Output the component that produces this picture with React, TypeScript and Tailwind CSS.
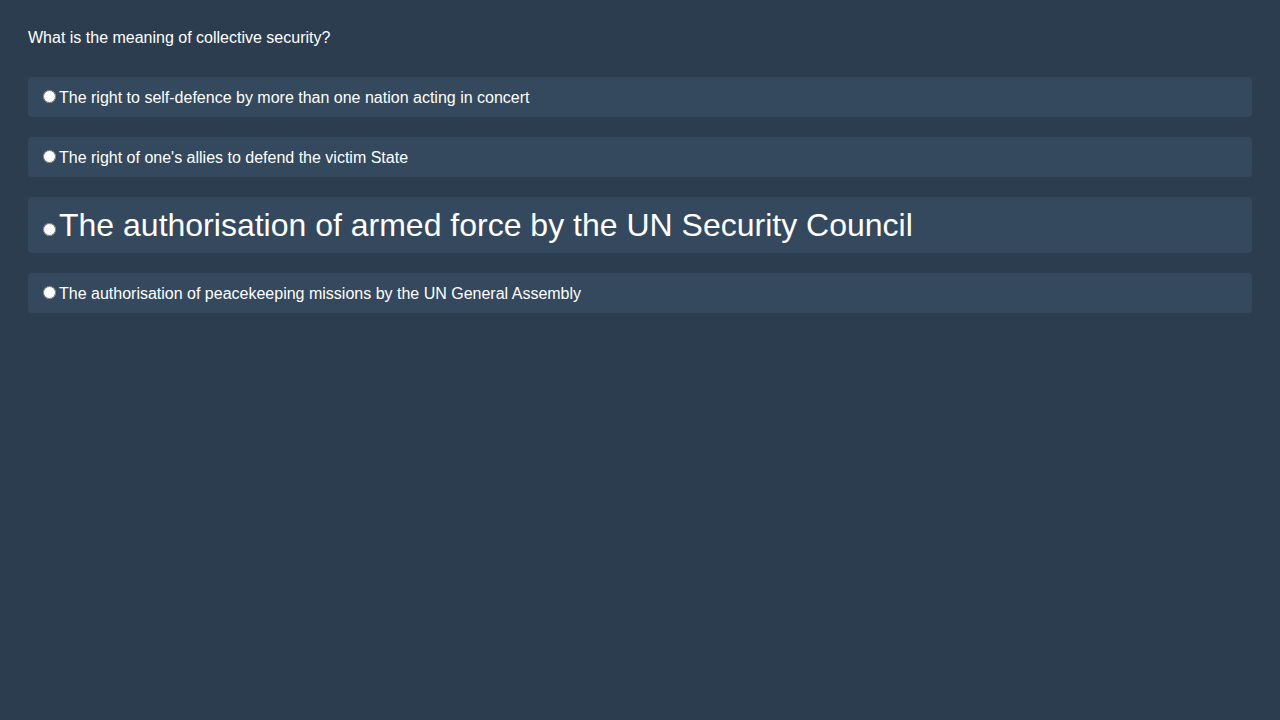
import React from "react";

const options = [
  { text: "The right to self-defence by more than one nation acting in concert", big: false },
  { text: "The right of one's allies to defend the victim State", big: false },
  { text: "The authorisation of armed force by the UN Security Council", big: true },
  { text: "The authorisation of peacekeeping missions by the UN General Assembly", big: false },
];

export default function App() {
  return (
    <div
      className="min-h-screen bg-[#2d3d50] px-[28px] pt-[29px] text-white"
      style={{ fontFamily: '"Liberation Sans", Arial, sans-serif' }}
    >
      <p className="text-[16px] leading-[18px]">What is the meaning of collective security?</p>
      <div className="mt-[30px] flex flex-col gap-[20px]">
        {options.map((o, i) => (
          <label
            key={i}
            className={
              o.big
                ? "block rounded-[4px] bg-[#34495e] px-[10px] py-[10px] text-[32px] leading-[36px]"
                : "block rounded-[4px] bg-[#34495e] px-[10px] py-[10px] text-[16px] leading-[18px]"
            }
          >
            <input type="radio" name="q" className="m-[3px_3px_0_5px]" />
            {o.text}
          </label>
        ))}
      </div>
    </div>
  );
}
